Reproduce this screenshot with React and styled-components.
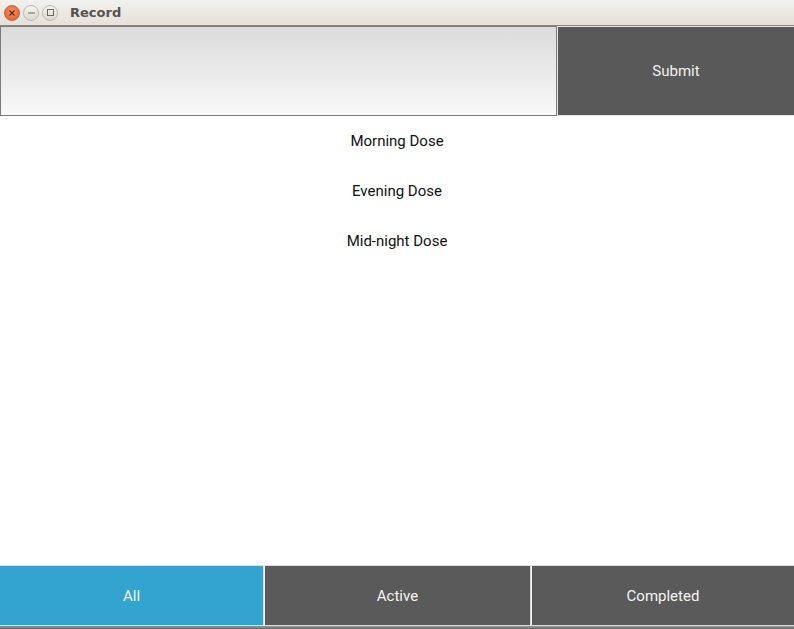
import React from "react";
import styled, { createGlobalStyle } from "styled-components";

const Global = createGlobalStyle`
  html, body { margin: 0; padding: 0; background: #ffffff; }
  #root { height: 629px; }
`;

const Window = styled.div`
  width: 794px;
  height: 629px;
  display: flex;
  flex-direction: column;
  background: #ffffff;
  font-family: Roboto, "Noto Sans", sans-serif;
  overflow: hidden;
`;

const TitleBar = styled.div`
  height: 25px;
  flex: none;
  display: flex;
  align-items: center;
  background: linear-gradient(#f3f1ee, #e5e0da);
  border-bottom: 1px solid #8a8681;
  padding-left: 4px;
`;

const WinButtons = styled.div`
  display: flex;
  gap: 3px;
  align-items: center;
`;

const WinBtn = styled.div`
  width: 16px;
  height: 16px;
  border-radius: 50%;
  box-sizing: border-box;
  display: flex;
  align-items: center;
  justify-content: center;
  background: ${(p) =>
    p.$close
      ? "radial-gradient(circle at 50% 40%, #f7905f, #e05a2c)"
      : "linear-gradient(#f6f4f1, #dcd8d2)"};
  border: 1px solid ${(p) => (p.$close ? "#c0603a" : "#bdb8b1")};
`;

const Title = styled.div`
  margin-left: 12px;
  font-family: "DejaVu Sans", sans-serif;
  font-weight: bold;
  font-size: 13px;
  color: #56524d;
`;

const TopRow = styled.div`
  height: 90px;
  flex: none;
  display: flex;
  gap: 1px;
  background: #e6e6e6;
`;

const Input = styled.input`
  width: 557px;
  flex: none;
  box-sizing: border-box;
  border: 1px solid #7b7b7b;
  background: linear-gradient(#dbdbdb, #f9f9f9);
  outline: none;
  margin: 0;
  padding: 0 8px;
  font-family: Roboto, sans-serif;
  font-size: 15px;
`;

const SubmitButton = styled.button`
  flex: 1;
  margin: 1px 0 1px 0;
  border: none;
  background: #595959;
  color: #f2f2f2;
  font-family: Roboto, sans-serif;
  font-size: 15px;
  padding: 0;
`;

const List = styled.div`
  flex: 1;
  display: flex;
  flex-direction: column;
`;

const Item = styled.div`
  height: 50px;
  display: flex;
  align-items: center;
  justify-content: center;
  font-size: 15px;
  color: #111111;
`;

const TabBar = styled.div`
  height: 59px;
  flex: none;
  display: grid;
  grid-template-columns: 263px 266px 1fr;
  background: #dedede;
  gap: 1px;
  padding-top: 1px;
  padding-bottom: 1px;
`;

const Tab = styled.button`
  border: none;
  margin: 0;
  padding: 0;
  background: ${(p) => (p.$active ? "#32a4cf" : "#5a5a5a")};
  color: #f4f4f4;
  font-family: Roboto, sans-serif;
  font-size: 15px;
  border-left: ${(p) => (p.$active ? "none" : "1px solid #f2f2f2")};
`;

const BottomEdge = styled.div`
  height: 3px;
  flex: none;
  background: linear-gradient(#9a9a9a, #6a6a6a);
`;

export default function App() {
  return (
    <Window>
      <Global />
      <TitleBar>
        <WinButtons>
          <WinBtn $close>
            <svg width="6" height="6" viewBox="0 0 6 6">
              <path d="M0.5 0.5L5.5 5.5M5.5 0.5L0.5 5.5" stroke="#5a2410" strokeWidth="1.1" />
            </svg>
          </WinBtn>
          <WinBtn>
            <svg width="7" height="2" viewBox="0 0 7 2">
              <path d="M0 1H7" stroke="#6b665f" strokeWidth="1" />
            </svg>
          </WinBtn>
          <WinBtn>
            <svg width="7" height="7" viewBox="0 0 7 7">
              <rect x="0.5" y="0.5" width="6" height="6" fill="none" stroke="#6b665f" strokeWidth="1" />
            </svg>
          </WinBtn>
        </WinButtons>
        <Title>Record</Title>
      </TitleBar>
      <TopRow>
        <Input />
        <SubmitButton>Submit</SubmitButton>
      </TopRow>
      <List>
        <Item>Morning Dose</Item>
        <Item>Evening Dose</Item>
        <Item>Mid-night Dose</Item>
      </List>
      <TabBar>
        <Tab $active>All</Tab>
        <Tab>Active</Tab>
        <Tab>Completed</Tab>
      </TabBar>
      <BottomEdge />
    </Window>
  );
}
